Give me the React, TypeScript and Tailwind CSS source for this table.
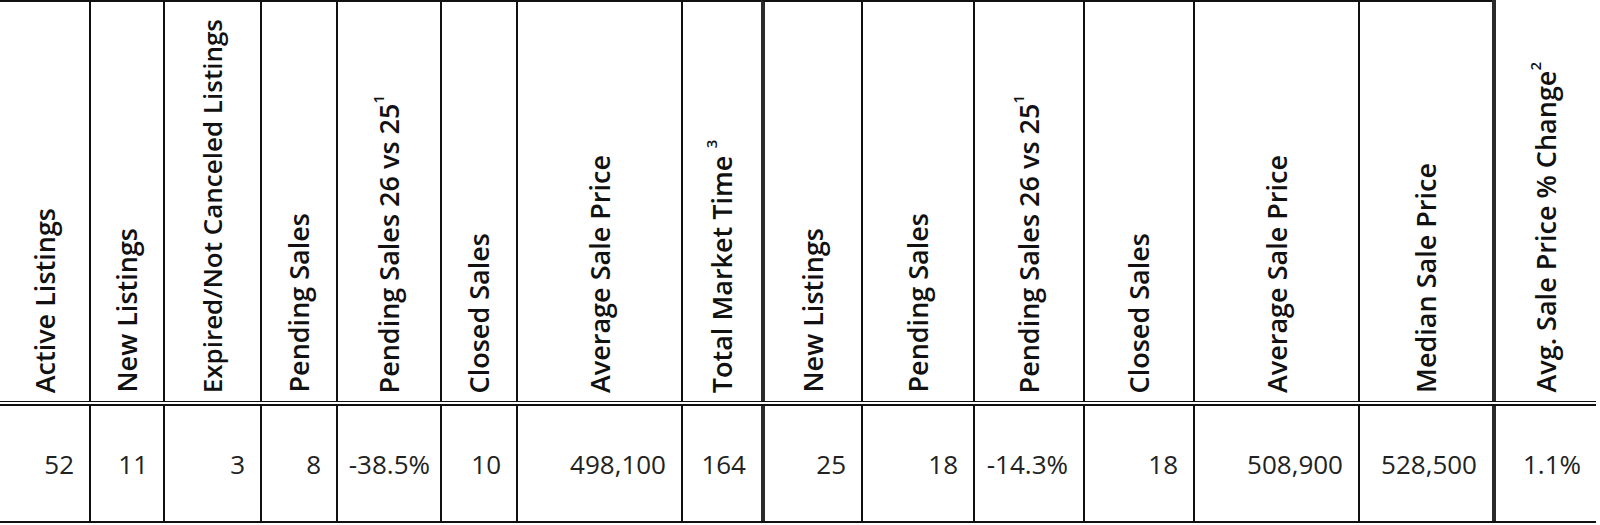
import React from 'react';

type Col = {
  label: string;
  sup?: string;
  supSpace?: boolean;
  value: string;
  w: string;       // column width incl. left border
  thick?: boolean; // heavy left rule
  pr?: string;
  fs?: string;
};

const cols: Col[] = [
  { label: 'Active Listings', value: '52', w: 'w-[89px]' },
  { label: 'New Listings', value: '11', w: 'w-[74px]' },
  { label: 'Expired/Not Canceled Listings', value: '3', w: 'w-[97px]', fs: 'text-[26px]' },
  { label: 'Pending Sales', value: '8', w: 'w-[76px]' },
  { label: 'Pending Sales 26 vs 25', sup: '1', value: '-38.5%', w: 'w-[104px]', pr: 'pr-[10px]' },
  { label: 'Closed Sales', value: '10', w: 'w-[76px]' },
  { label: 'Average Sale Price', value: '498,100', w: 'w-[165px]' },
  { label: 'Total Market Time', sup: '3', supSpace: true, value: '164', w: 'w-[80px]' },
  { label: 'New Listings', value: '25', w: 'w-[100px]', thick: true },
  { label: 'Pending Sales', value: '18', w: 'w-[112px]' },
  { label: 'Pending Sales 26 vs 25', sup: '1', value: '-14.3%', w: 'w-[110px]' },
  { label: 'Closed Sales', value: '18', w: 'w-[110px]' },
  { label: 'Average Sale Price', value: '508,900', w: 'w-[165px]' },
  { label: 'Median Sale Price', value: '528,500', w: 'w-[134px]' },
  { label: 'Avg. Sale Price % Change', sup: '2', value: '1.1%', w: 'w-[104px]', thick: true },
];

function leftRule(i: number, c: Col) {
  if (i === 0) return '';
  return c.thick ? 'border-l-[4px] border-[#2b2b2b]' : 'border-l-2 border-[#111]';
}

export default function App(): JSX.Element {
  return (
    <div
      className="w-[1600px] h-[525px] bg-white text-[#111]"
      style={{ fontFamily: '"Open Sans", "Liberation Sans", sans-serif' }}
    >
      {/* header row */}
      <div className="flex h-[401px]">
        {cols.map((c, i) => (
          <div
            key={'h' + i}
            className={`${c.w} shrink-0 flex items-end justify-center pb-[8px] ${leftRule(i, c)} ${
              i === cols.length - 1 ? '' : 'border-t-2 border-t-[#111]'
            }`}
          >
            <span
              className={`[writing-mode:vertical-rl] rotate-180 whitespace-nowrap ${c.fs ?? 'text-[27px]'} font-semibold leading-[1.15]`}
            >
              {c.label}
              {c.supSpace ? '\u00a0' : ''}
              {c.sup && (
                <span className="relative left-[11px] text-[15px] font-semibold leading-none">{c.sup}</span>
              )}
            </span>
          </div>
        ))}
      </div>

      {/* double rule under header */}
      <div className="w-[1596px] h-px bg-[#111]" />
      <div className="w-[1596px] h-[2px]" />
      <div className="w-[1596px] h-[2px] bg-[#111]" />

      {/* data row */}
      <div className="flex w-[1596px] h-[117px] border-b-2 border-b-[#111]">
        {cols.map((c, i) => (
          <div
            key={'d' + i}
            className={`${c.w} shrink-0 flex items-center justify-end ${c.pr ?? 'pr-[15px]'} ${leftRule(i, c)}`}
          >
            <span className="text-[26px] text-[#222] leading-none">{c.value}</span>
          </div>
        ))}
      </div>
    </div>
  );
}
